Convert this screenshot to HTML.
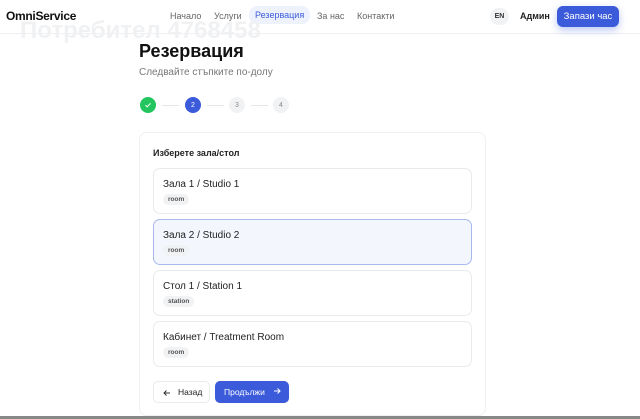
<!DOCTYPE html>
<html><head><meta charset="utf-8">
<style>
*{box-sizing:border-box;margin:0;padding:0}
body{width:640px;height:419px;overflow:hidden;background:#fff;font-family:"Liberation Sans","DejaVu Sans",sans-serif;color:#111;position:relative}
.hdr{position:absolute;left:0;top:0;width:640px;height:34px;border-bottom:1px solid #eef0f3;background:#fff}
.logo{position:absolute;left:6px;top:9px;font-size:12px;font-weight:bold;letter-spacing:-0.3px}
.nav a{position:absolute;top:11px;font-size:9px;color:#666;text-decoration:none}
.nav .act{background:#eef2fd;color:#3b5bdb;border-radius:8px;padding:4px 6px;top:6px}
.wm{position:absolute;left:20px;top:17px;font-size:24px;font-weight:bold;color:#f0f1f3;z-index:5}
.en{position:absolute;left:490px;top:8px;width:19px;height:17px;border-radius:9px;background:#f1f2f4;font-size:7px;font-weight:bold;text-align:center;line-height:17px;color:#333}
.adm{position:absolute;left:520px;top:11px;font-size:9px;font-weight:bold;color:#222}
.cta{position:absolute;left:557px;top:6px;width:62px;height:21px;border-radius:6px;background:#3b5bdb;color:#fff;font-size:9.5px;text-align:center;line-height:21px;box-shadow:0 3px 8px rgba(59,91,219,.35)}
h1{position:absolute;left:139px;top:41px;font-size:18px;font-weight:bold;color:#111}
.sub{position:absolute;left:139px;top:67px;font-size:10px;color:#777}
.st{position:absolute;top:97px;width:16px;height:16px;border-radius:50%;font-size:7px;display:flex;align-items:center;justify-content:center;color:#888;background:#f1f2f4}
.ln{position:absolute;top:105px;height:1px;width:17px;background:#e5e7eb}
.card{position:absolute;left:139px;top:132px;width:347px;height:284px;border:1px solid #eef0f2;border-radius:8px;background:#fff}
.ct{position:absolute;left:153px;top:148px;font-size:9px;font-weight:bold;color:#222}
.it{position:absolute;left:153px;width:319px;height:46px;border:1px solid #e8eaed;border-radius:7px;background:#fff}
.it.sel{background:#f4f6fd;border-color:#a9b9ee}
.it b{position:absolute;left:9px;top:10px;font-size:10px;font-weight:normal;color:#222}
.it i{position:absolute;left:9px;top:25px;font-style:normal;font-size:6.5px;font-weight:bold;color:#555;background:#f1f2f4;border-radius:6px;padding:2px 5px}
.back{position:absolute;left:153px;top:381px;width:57px;height:22px;border:1px solid #e8eaed;border-radius:5px;font-size:8.5px;color:#222;line-height:20px;padding-left:24px}
.next{position:absolute;left:215px;top:381px;width:74px;height:22px;border-radius:5px;background:#3b5bdb;color:#fff;font-size:8.5px;line-height:22px;padding-left:9px}
.bl{position:absolute;left:0;top:416px;width:640px;height:3px;background:#888}
</style></head><body>
<div class="hdr">
<div class="logo">OmniService</div>
<div class="nav">
<a style="left:170px">Начало</a>
<a style="left:214px">Услуги</a>
<a class="act" style="left:249px">Резервация</a>
<a style="left:317px">За нас</a>
<a style="left:357px">Контакти</a>
</div>
<div class="en">EN</div>
<div class="adm">Админ</div>
<div class="cta">Запази час</div>
</div>
<div class="wm">Потребител 4768458</div>
<h1>Резервация</h1>
<div class="sub">Следвайте стъпките по-долу</div>
<div class="st" style="left:140px;background:#22c55e;color:#fff"><svg width="8" height="8" viewBox="0 0 8 8"><path d="M1.5 4.2 3.2 5.8 6.5 2.3" fill="none" stroke="#fff" stroke-width="1"/></svg></div>
<div class="ln" style="left:162px"></div>
<div class="st" style="left:185px;background:#3b5bdb;color:#fff">2</div>
<div class="ln" style="left:207px"></div>
<div class="st" style="left:229px">3</div>
<div class="ln" style="left:251px"></div>
<div class="st" style="left:273px">4</div>
<div class="card"></div>
<div class="ct">Изберете зала/стол</div>
<div class="it" style="top:168px"><b>Зала 1 / Studio 1</b><i>room</i></div>
<div class="it sel" style="top:219px"><b>Зала 2 / Studio 2</b><i>room</i></div>
<div class="it" style="top:270px"><b>Стол 1 / Station 1</b><i>station</i></div>
<div class="it" style="top:321px"><b>Кабинет / Treatment Room</b><i>room</i></div>
<div class="back"><svg width="8" height="8" viewBox="0 0 8 8" style="position:absolute;left:9px;top:7px"><path d="M7 4H1M3.5 1.5 1 4l2.5 2.5" fill="none" stroke="#333" stroke-width="1"/></svg>Назад</div>
<div class="next">Продължи <svg width="8" height="8" viewBox="0 0 8 8" style="margin-left:6px"><path d="M1 4h6M4.5 1.5 7 4 4.5 6.5" fill="none" stroke="#fff" stroke-width="1"/></svg></div>
<div class="bl"></div>
</body></html>
